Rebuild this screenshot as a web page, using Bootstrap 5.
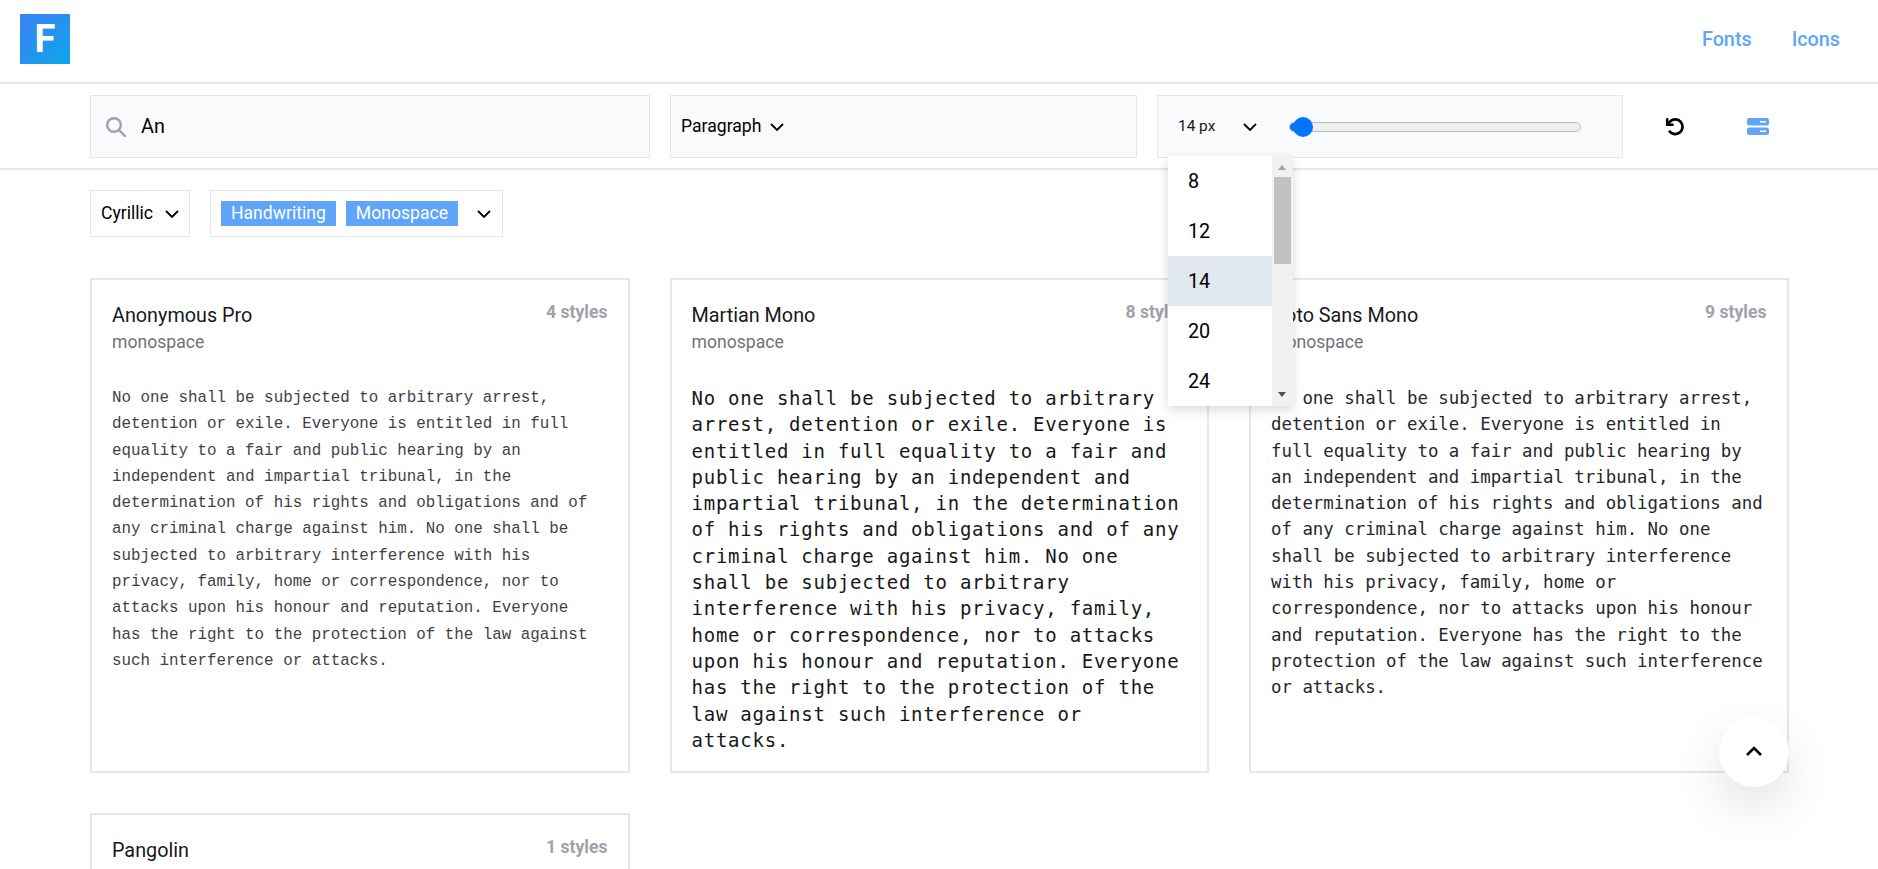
<!DOCTYPE html>
<html lang="en">
<head>
    <meta charset="UTF-8">
    <meta name="viewport" content="width=device-width, initial-scale=1.0">
    <title>Fonts</title>
    <link href="https://cdn.jsdelivr.net/npm/bootstrap@5.3.0/dist/css/bootstrap.min.css" rel="stylesheet">
    <style>
        html, body { overflow-x: hidden; }
        body { font-family: Roboto, "Liberation Sans", sans-serif; font-size: 17.6px; color: #18181b; background: #fff; }

        .top-bar { height: 84px; border-bottom: 2px solid #e5e7eb; padding: 0 38px 0 20px; }
        .logo-box { width: 50px; height: 50px; margin-top: -4px; background: linear-gradient(135deg, #3b82f6, #0ea5e9); color: #fff; font-size: 38px; font-weight: 700; line-height: 50px; text-align: center; }
        .top-link { color: #60a5fa; font-size: 19.8px; font-weight: 500; text-decoration: none; }
        .top-links { gap: 40px; margin-top: -2px; }

        .tool-bar { height: 86px; border-bottom: 2px solid #e5e7eb; padding: 11px 90px 0; box-shadow: 0 1px 2px rgba(0, 0, 0, .04); gap: 20px; }
        .tool-box { height: 63px; background: #f9fafb; border: 1px solid #e5e7eb; }
        .box-search { width: 560px; padding: 0 15px; gap: 15px; font-size: 19.8px; color: #000; }
        .box-para { width: 467px; padding: 0 10px; color: #000; gap: 8px; }
        .box-size { width: 466px; padding: 0 20px; position: relative; }
        .size-label { width: 64px; font-size: 15.4px; }
        .size-slider { width: 292px; height: 20px; margin: 0 0 0 31px; appearance: none; -webkit-appearance: none; background: transparent; display: block; }
        .size-slider::-webkit-slider-runnable-track { height: 10px; border: 1px solid #b8b8b8; border-radius: 5px; background: linear-gradient(to right, #0075ff 13px, #efefef 13px); }
        .size-slider::-webkit-slider-thumb { -webkit-appearance: none; width: 20px; height: 20px; margin-top: -6px; margin-left: 3px; border-radius: 50%; background: #0075ff; border: 0; }

        .tool-icons { height: 63px; margin-left: 21px; gap: 61px; }

        .size-menu { position: absolute; left: 10px; top: 60px; width: 125px; height: 250px; background: #fff; box-shadow: 0 4px 10px rgba(0, 0, 0, .15); z-index: 20; }
        .size-list { width: 104px; }
        .size-item { height: 50px; line-height: 51px; padding-left: 20px; font-size: 19.8px; color: #000; }
        .size-item.current { background: #e2e8f0; }
        .fake-scroll { width: 21px; background: #f1f1f1; position: relative; }
        .fake-thumb { position: absolute; left: 2px; right: 2px; top: 21px; height: 87px; background: #c1c1c1; }
        .fake-up, .fake-down { position: absolute; left: 6px; width: 0; height: 0; border-left: 4.5px solid transparent; border-right: 4.5px solid transparent; }
        .fake-up { top: 9px; border-bottom: 5px solid #a3a3a3; }
        .fake-down { bottom: 9px; border-top: 5px solid #505050; }

        .filter-bar { padding: 20px 90px 0; gap: 20px; }
        .filter-box { height: 47px; border: 1px solid #e5e7eb; background: #fff; color: #000; }
        .box-script { width: 100px; padding: 0 9px 0 10px; justify-content: space-between; }
        .box-kinds { width: 293px; padding: 0 10px; gap: 10px; }
        .kind-tag { height: 25px; line-height: 25px; padding: 0 10px; background: #60a5fa; color: #fff; }

        .font-grid { display: grid; grid-template-columns: repeat(3, 539.5px); column-gap: 40px; row-gap: 40px; padding: 41px 0 0 90px; }
        .font-tile { height: 495px; border: 2px solid #e5e7eb; padding: 23px 20px 0; }
        .font-name { font-size: 19.8px; line-height: 26px; color: #18181b; }
        .font-kind { font-size: 17.6px; line-height: 24px; margin-top: 1px; color: #71717a; }
        .style-count { font-size: 17.6px; font-weight: 700; line-height: 22px; margin-top: -2px; color: #a1a1aa; }
        .sample { margin: 31px 0 0; line-height: 26.3px; color: #27272a; }
        .sample-anon { font-family: "Liberation Mono", monospace; font-size: 15.85px; padding-right: 6px; color: #3f3f46; }
        .sample-martian { font-family: "DejaVu Sans Mono", monospace; font-size: 19px; letter-spacing: .76px; color: #18181b; }
        .sample-noto { font-family: "DejaVu Sans Mono", monospace; font-size: 17.39px; }

        .back-top { position: fixed; left: 1719px; top: 717px; width: 70px; height: 70px; border: 0; border-radius: 50%; background: #fff; box-shadow: 0 20px 50px rgba(0, 0, 0, .12); z-index: 30; padding: 0; }
    </style>
</head>
<body>
    <nav class="top-bar d-flex justify-content-between align-items-center">
        <div class="logo-box">F</div>
        <div class="top-links d-flex">
            <a class="top-link" href="#">Fonts</a>
            <a class="top-link" href="#">Icons</a>
        </div>
    </nav>

    <div class="tool-bar d-flex align-items-start">
        <div class="tool-box box-search d-flex align-items-center">
            <svg width="20" height="20" viewBox="0 0 20 20" fill="none" stroke="#a1a1aa" stroke-width="2.4" stroke-linecap="round"><circle cx="8" cy="8" r="6.8"/><path d="M13 13l5.8 5.8"/></svg>
            <span>An</span>
        </div>
        <div class="tool-box box-para d-flex align-items-center">
            <span>Paragraph</span>
            <svg width="16" height="16" viewBox="0 0 16 16" fill="none" stroke="#000" stroke-width="1.8"><path d="M2 5l6 6 6-6"/></svg>
        </div>
        <div class="tool-box box-size d-flex align-items-center">
            <span class="size-label">14 px</span>
            <svg width="16" height="16" viewBox="0 0 16 16" fill="none" stroke="#000" stroke-width="1.8"><path d="M2 5l6 6 6-6"/></svg>
            <input class="size-slider" type="range" min="8" max="96" value="8">
            <div class="size-menu d-flex">
                <div class="size-list">
                    <div class="size-item">8</div>
                    <div class="size-item">12</div>
                    <div class="size-item current">14</div>
                    <div class="size-item">20</div>
                    <div class="size-item">24</div>
                </div>
                <div class="fake-scroll">
                    <div class="fake-up"></div>
                    <div class="fake-thumb"></div>
                    <div class="fake-down"></div>
                </div>
            </div>
        </div>
        <div class="tool-icons d-flex align-items-center">
            <svg width="22" height="22" viewBox="0 0 24 24" fill="none" stroke="#000" stroke-width="3"><path d="M5.5 16a8 8 0 1 0 1.2-10L4 8.8"/><path d="M3.5 2.5v7h7" stroke-width="2.8"/></svg>
            <svg width="22" height="17" viewBox="0 0 22 17"><rect x="0" y="0" width="22" height="7.5" rx="2.5" fill="#60a5fa"/><rect x="0" y="9.5" width="22" height="7.5" rx="2.5" fill="#60a5fa"/><rect x="13" y="3" width="6" height="1.5" fill="#fff"/><rect x="13" y="12.5" width="6" height="1.5" fill="#fff"/></svg>
        </div>
    </div>

    <div class="filter-bar d-flex">
        <div class="filter-box box-script d-flex align-items-center">
            <span>Cyrillic</span>
            <svg width="16" height="16" viewBox="0 0 16 16" fill="none" stroke="#000" stroke-width="1.8"><path d="M2 5l6 6 6-6"/></svg>
        </div>
        <div class="filter-box box-kinds d-flex align-items-center">
            <span class="kind-tag">Handwriting</span>
            <span class="kind-tag">Monospace</span>
            <svg class="ms-auto" width="16" height="16" viewBox="0 0 16 16" fill="none" stroke="#000" stroke-width="1.8"><path d="M2 5l6 6 6-6"/></svg>
        </div>
    </div>

    <div class="font-grid">
        <div class="font-tile">
            <div class="d-flex justify-content-between align-items-start">
                <div>
                    <div class="font-name">Anonymous Pro</div>
                    <div class="font-kind">monospace</div>
                </div>
                <div class="style-count">4 styles</div>
            </div>
            <p class="sample sample-anon">No one shall be subjected to arbitrary arrest, detention or exile. Everyone is entitled in full equality to a fair and public hearing by an independent and impartial tribunal, in the determination of his rights and obligations and of any criminal charge against him. No one shall be subjected to arbitrary interference with his privacy, family, home or correspondence, nor to attacks upon his honour and reputation. Everyone has the right to the protection of the law against such interference or attacks.</p>
        </div>
        <div class="font-tile">
            <div class="d-flex justify-content-between align-items-start">
                <div>
                    <div class="font-name">Martian Mono</div>
                    <div class="font-kind">monospace</div>
                </div>
                <div class="style-count">8 styles</div>
            </div>
            <p class="sample sample-martian">No one shall be subjected to arbitrary arrest, detention or exile. Everyone is entitled in full equality to a fair and public hearing by an independent and impartial tribunal, in the determination of his rights and obligations and of any criminal charge against him. No one shall be subjected to arbitrary interference with his privacy, family, home or correspondence, nor to attacks upon his honour and reputation. Everyone has the right to the protection of the law against such interference or attacks.</p>
        </div>
        <div class="font-tile">
            <div class="d-flex justify-content-between align-items-start">
                <div>
                    <div class="font-name">Noto Sans Mono</div>
                    <div class="font-kind">monospace</div>
                </div>
                <div class="style-count">9 styles</div>
            </div>
            <p class="sample sample-noto">No one shall be subjected to arbitrary arrest, detention or exile. Everyone is entitled in full equality to a fair and public hearing by an independent and impartial tribunal, in the determination of his rights and obligations and of any criminal charge against him. No one shall be subjected to arbitrary interference with his privacy, family, home or correspondence, nor to attacks upon his honour and reputation. Everyone has the right to the protection of the law against such interference or attacks.</p>
        </div>
        <div class="font-tile">
            <div class="d-flex justify-content-between align-items-start">
                <div class="font-name">Pangolin</div>
                <div class="style-count">1 styles</div>
            </div>
        </div>
    </div>

    <button class="back-top d-flex align-items-center justify-content-center" type="button" aria-label="Back to top">
        <svg width="20" height="20" viewBox="0 0 20 20" fill="none" stroke="#000" stroke-width="2.6"><path d="M3 13l7-7 7 7"/></svg>
    </button>
    <script src="https://cdn.jsdelivr.net/npm/bootstrap@5.3.0/dist/js/bootstrap.bundle.min.js"></script>
</body>
</html>
